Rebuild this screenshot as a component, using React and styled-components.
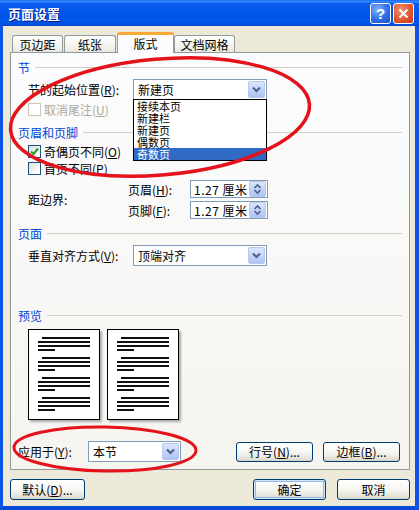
import React from 'react';
import styled, { createGlobalStyle } from 'styled-components';

const GlobalStyle = createGlobalStyle`
    html, body {
        margin: 0;
        padding: 0;
        background: #ffffff;
    }

    body {
        font-family: "Noto Sans CJK SC", "Liberation Sans", sans-serif;
        font-size: 12px;
        color: #000000;
    }
`;

const Window = styled.div`
    position: relative;
    width: 419px;
    height: 510px;
    display: flex;
    flex-direction: column;
    overflow: hidden;
`;

const TitleBar = styled.div`
    height: 26px;
    flex: none;
    display: flex;
    align-items: center;
    padding: 0 5px 0 8px;
    background: linear-gradient(
        to bottom,
        #0a5ee6 0%,
        #3a8cff 5%,
        #0a5cf0 14%,
        #0055e8 50%,
        #0057ec 85%,
        #0046d0 100%
    );
`;

const Title = styled.span`
    flex: 1;
    color: #ffffff;
    font-weight: bold;
    font-size: 13px;
    text-shadow: 1px 1px 0 #0a1883;
`;

const CaptionButton = styled.div`
    width: 21px;
    height: 21px;
    box-sizing: border-box;
    margin-left: 2px;
    border: 1px solid #ffffff;
    border-radius: 3px;
    display: flex;
    align-items: center;
    justify-content: center;
    color: #ffffff;
    font: bold 15px "Liberation Sans", sans-serif;
    background: ${(p) =>
        p.$close
            ? 'radial-gradient(circle at 35% 30%, #f0906e 0%, #e0562f 55%, #c0381a 100%)'
            : 'radial-gradient(circle at 35% 30%, #7fb3ff 0%, #2f6fe8 55%, #1a4fcc 100%)'};
`;

const Frame = styled.div`
    flex: 1;
    display: flex;
    flex-direction: column;
    background: #ece9d8;
    border-left: 3px solid #0a54e6;
    border-right: 4px solid #0a54e6;
    border-bottom: 4px solid #0a4cd8;
    padding: 6px 5px 6px 7px;
`;

const TabStrip = styled.div`
    height: 21px;
    margin-bottom: -1px;
    padding-left: 2px;
    display: flex;
    align-items: flex-end;
    position: relative;
    z-index: 1;
`;

const Tab = styled.div`
    box-sizing: border-box;
    width: ${(p) => p.$width}px;
    height: ${(p) => (p.$active ? 21 : 17)}px;
    margin-bottom: ${(p) => (p.$active ? 0 : 1)}px;
    margin-right: ${(p) => (p.$active ? 0 : 1)}px;
    border: 1px solid #919b9c;
    border-bottom: none;
    border-top: ${(p) => (p.$active ? '3px solid #f7a93a' : '1px solid #919b9c')};
    border-radius: 3px 3px 0 0;
    display: flex;
    align-items: center;
    justify-content: center;
    padding-bottom: ${(p) => (p.$active ? 2 : 0)}px;
    background: ${(p) =>
        p.$active ? '#fcfcfe' : 'linear-gradient(to bottom, #ffffff, #f3f2ec 70%, #e8e6dd)'};
`;

const Panel = styled.div`
    height: 418px;
    box-sizing: border-box;
    border: 1px solid #919b9c;
    background: linear-gradient(to bottom, #fcfcfe, #f5f4ef);
    padding: 0 7px;
    display: flex;
    flex-direction: column;
`;

const GroupHeader = styled.div`
    height: 14px;
    margin-top: ${(p) => p.$mt}px;
    display: flex;
    align-items: center;
    gap: 5px;
    color: #0046d5;

    &::after {
        content: '';
        flex: 1;
        height: 1px;
        background: #d0d0bf;
    }
`;

const Row = styled.div`
    display: flex;
    align-items: center;
    margin-top: ${(p) => p.$mt}px;
    margin-left: 10px;
    height: ${(p) => (p.$h ? `${p.$h}px` : 'auto')};
`;

const Label = styled.span`
    width: ${(p) => (p.$width ? `${p.$width}px` : 'auto')};
    flex: none;
    white-space: nowrap;
    color: ${(p) => (p.$disabled ? '#aca899' : '#000000')};
`;

const Key = styled.span`
    text-decoration: underline;
`;

const Combo = styled.div`
    position: relative;
    width: ${(p) => p.$width}px;
    height: 21px;
    box-sizing: border-box;
    border: 1px solid #7f9db9;
    background: #ffffff;
    display: flex;
    align-items: center;
    padding-left: 4px;
`;

const ComboText = styled.span`
    flex: 1;
`;

const ComboArrow = styled.div`
    width: 17px;
    height: 17px;
    margin-right: 1px;
    box-sizing: border-box;
    border: 1px solid #bac7e9;
    border-radius: 2px;
    background: linear-gradient(to bottom, #dbe6fd, #bfd1fa 60%, #aec4f6);
    display: flex;
    align-items: center;
    justify-content: center;
`;

const DropList = styled.div`
    position: absolute;
    left: -1px;
    top: 19px;
    width: ${(p) => p.$width}px;
    box-sizing: border-box;
    border: 1px solid #000000;
    background: #ffffff;
    z-index: 5;
`;

const DropItem = styled.div`
    height: 12px;
    line-height: 12px;
    padding-left: 3px;
    font-size: 11px;
    color: ${(p) => (p.$selected ? '#ffffff' : '#000000')};
    background: ${(p) => (p.$selected ? '#316ac5' : 'transparent')};
`;

const CheckBox = styled.div`
    width: 13px;
    height: 13px;
    box-sizing: border-box;
    flex: none;
    margin-right: 3px;
    border: 1px solid ${(p) => (p.$disabled ? '#cac8bb' : '#1c5180')};
    background: ${(p) =>
        p.$disabled ? '#ffffff' : 'linear-gradient(135deg, #dcdcd7, #ffffff 85%)'};
    display: flex;
    align-items: center;
    justify-content: center;
`;

const MarginBlock = styled.div`
    display: flex;
    align-items: center;
    margin-top: ${(p) => p.$mt}px;
    margin-left: 10px;
`;

const SpinColumn = styled.div`
    display: flex;
    flex-direction: column;
    gap: 3px;
`;

const SpinRow = styled.div`
    display: flex;
    align-items: center;
    height: 18px;
`;

const Spinner = styled.div`
    width: 78px;
    height: 18px;
    box-sizing: border-box;
    border: 1px solid #7f9db9;
    background: #ffffff;
    display: flex;
    align-items: center;
    padding-left: 3px;
`;

const SpinText = styled.span`
    flex: 1;
    letter-spacing: 0.5px;
`;

const SpinButtons = styled.div`
    width: 15px;
    height: 14px;
    margin-right: 1px;
    border: 1px solid #bac7e9;
    border-radius: 2px;
    background: linear-gradient(to bottom, #dbe6fd, #bfd1fa 60%, #aec4f6);
    display: flex;
    align-items: center;
    justify-content: center;
`;

const PreviewRow = styled.div`
    display: flex;
    gap: 7px;
    margin-top: ${(p) => p.$mt}px;
    margin-left: 10px;
`;

const Page = styled.div`
    width: 72px;
    height: 91px;
    box-sizing: border-box;
    border: 1px solid #000000;
    background: #ffffff;
    box-shadow: 2px 2px 2px rgba(0, 0, 0, 0.3);
    padding: 7px 8px 0 9px;
`;

const LineGroup = styled.div`
    margin-bottom: 6px;
`;

const Line = styled.div`
    height: 2px;
    margin-bottom: 2px;
    margin-left: ${(p) => p.$indent || 0}px;
    width: ${(p) => p.$width}px;
    background: #111111;
`;

const ApplyRow = styled.div`
    display: flex;
    align-items: center;
    margin-top: ${(p) => p.$mt}px;
    margin-right: 2px;
    height: 21px;
`;

const ButtonGroup = styled.div`
    margin-left: auto;
    display: flex;
    gap: 10px;
`;

const Button = styled.div`
    width: ${(p) => p.$width}px;
    height: ${(p) => p.$h || 21}px;
    box-sizing: border-box;
    border: 1px solid #003c74;
    border-radius: 3px;
    background: linear-gradient(to bottom, #ffffff, #f4f4f0 55%, #e3e0d6 90%, #d6d0c5);
    display: flex;
    align-items: center;
    justify-content: center;
    white-space: nowrap;
    box-shadow: ${(p) => (p.$default ? 'inset 0 0 0 1px #cee7ff, inset 0 0 0 2px #98b8ea' : 'none')};
`;

const Footer = styled.div`
    display: flex;
    margin-top: 9px;
    height: 21px;
`;

const FooterRight = styled.div`
    margin-left: auto;
    display: flex;
    gap: 11px;
`;

const Overlay = styled.svg`
    position: absolute;
    left: 0;
    top: 0;
    pointer-events: none;
    z-index: 10;
`;

const Chevron = () => (
    <svg width="9" height="7" viewBox="0 0 9 7">
        <polyline points="1,1.5 4.5,5 8,1.5" fill="none" stroke="#4d6185" strokeWidth="2" />
    </svg>
);

const SpinArrows = () => (
    <svg width="9" height="12" viewBox="0 0 9 12">
        <polyline points="1.5,5 4.5,2 7.5,5" fill="none" stroke="#4d6185" strokeWidth="1.6" />
        <polyline points="1.5,7 4.5,10 7.5,7" fill="none" stroke="#4d6185" strokeWidth="1.6" />
    </svg>
);

const PreviewPage = () => (
    <Page>
        {[0, 1, 2, 3].map((i) => (
            <LineGroup key={i}>
                <Line $indent={4} $width={48} />
                <Line $width={52} />
                <Line $width={52} />
                <Line $width={17} />
            </LineGroup>
        ))}
    </Page>
);

const sectionStarts = ['接续本页', '新建栏', '新建页', '偶数页', '奇数页'];

const App = () => (
    <>
        <GlobalStyle />
        <Window>
            <TitleBar>
                <Title>页面设置</Title>
                <CaptionButton>?</CaptionButton>
                <CaptionButton $close>
                    <svg width="11" height="11" viewBox="0 0 11 11">
                        <path d="M1.5 1.5 L9.5 9.5 M9.5 1.5 L1.5 9.5" stroke="#ffffff" strokeWidth="2" />
                    </svg>
                </CaptionButton>
            </TitleBar>
            <Frame>
                <TabStrip>
                    <Tab $width={51}>页边距</Tab>
                    <Tab $width={52}>纸张</Tab>
                    <Tab $width={57} $active>
                        版式
                    </Tab>
                    <Tab $width={61}>文档网格</Tab>
                </TabStrip>
                <Panel>
                    <GroupHeader $mt={7}>节</GroupHeader>
                    <Row $mt={5}>
                        <Label $width={105}>
                            节的起始位置(<Key>R</Key>):
                        </Label>
                        <Combo $width={134}>
                            <ComboText>新建页</ComboText>
                            <ComboArrow>
                                <Chevron />
                            </ComboArrow>
                            <DropList $width={134}>
                                {sectionStarts.map((item) => (
                                    <DropItem key={item} $selected={item === '奇数页'}>
                                        {item}
                                    </DropItem>
                                ))}
                            </DropList>
                        </Combo>
                    </Row>
                    <Row $mt={3} $h={13}>
                        <CheckBox $disabled />
                        <Label $disabled>
                            取消尾注(<Key>U</Key>)
                        </Label>
                    </Row>

                    <GroupHeader $mt={9}>页眉和页脚</GroupHeader>
                    <Row $mt={6} $h={13}>
                        <CheckBox>
                            <svg width="9" height="9" viewBox="0 0 9 9">
                                <polyline points="1,4.5 3.5,7 8,1.5" fill="none" stroke="#21a121" strokeWidth="2" />
                            </svg>
                        </CheckBox>
                        <Label>
                            奇偶页不同(<Key>O</Key>)
                        </Label>
                    </Row>
                    <Row $mt={4} $h={13}>
                        <CheckBox />
                        <Label>
                            首页不同(<Key>P</Key>)
                        </Label>
                    </Row>
                    <MarginBlock $mt={5}>
                        <Label $width={100}>距边界:</Label>
                        <SpinColumn>
                            <SpinRow>
                                <Label $width={62}>
                                    页眉(<Key>H</Key>):
                                </Label>
                                <Spinner>
                                    <SpinText>1.27 厘米</SpinText>
                                    <SpinButtons>
                                        <SpinArrows />
                                    </SpinButtons>
                                </Spinner>
                            </SpinRow>
                            <SpinRow>
                                <Label $width={62}>
                                    页脚(<Key>F</Key>):
                                </Label>
                                <Spinner>
                                    <SpinText>1.27 厘米</SpinText>
                                    <SpinButtons>
                                        <SpinArrows />
                                    </SpinButtons>
                                </Spinner>
                            </SpinRow>
                        </SpinColumn>
                    </MarginBlock>

                    <GroupHeader $mt={7}>页面</GroupHeader>
                    <Row $mt={5}>
                        <Label $width={105}>
                            垂直对齐方式(<Key>V</Key>):
                        </Label>
                        <Combo $width={134}>
                            <ComboText>顶端对齐</ComboText>
                            <ComboArrow>
                                <Chevron />
                            </ComboArrow>
                        </Combo>
                    </Row>

                    <GroupHeader $mt={42}>预览</GroupHeader>
                    <PreviewRow $mt={7}>
                        <PreviewPage />
                        <PreviewPage />
                    </PreviewRow>

                    <ApplyRow $mt={21}>
                        <Label $width={70}>
                            应用于(<Key>Y</Key>):
                        </Label>
                        <Combo $width={93}>
                            <ComboText>本节</ComboText>
                            <ComboArrow>
                                <Chevron />
                            </ComboArrow>
                        </Combo>
                        <ButtonGroup>
                            <Button $width={77} $h={20}>
                                行号(<Key>N</Key>)...
                            </Button>
                            <Button $width={77} $h={20}>
                                边框(<Key>B</Key>)...
                            </Button>
                        </ButtonGroup>
                    </ApplyRow>
                </Panel>
                <Footer>
                    <Button $width={75}>
                        默认(<Key>D</Key>)...
                    </Button>
                    <FooterRight>
                        <Button $width={73} $default>
                            确定
                        </Button>
                        <Button $width={73}>取消</Button>
                    </FooterRight>
                </Footer>
            </Frame>
            <Overlay width="419" height="510" viewBox="0 0 419 510">
                <ellipse
                    cx="160"
                    cy="117"
                    rx="150"
                    ry="58"
                    transform="rotate(-5 160 117)"
                    fill="none"
                    stroke="#e3121b"
                    strokeWidth="3.5"
                />
                <ellipse
                    cx="105"
                    cy="449"
                    rx="91"
                    ry="22"
                    transform="rotate(1 105 449)"
                    fill="none"
                    stroke="#e3121b"
                    strokeWidth="3"
                />
            </Overlay>
        </Window>
    </>
);

export default App;
